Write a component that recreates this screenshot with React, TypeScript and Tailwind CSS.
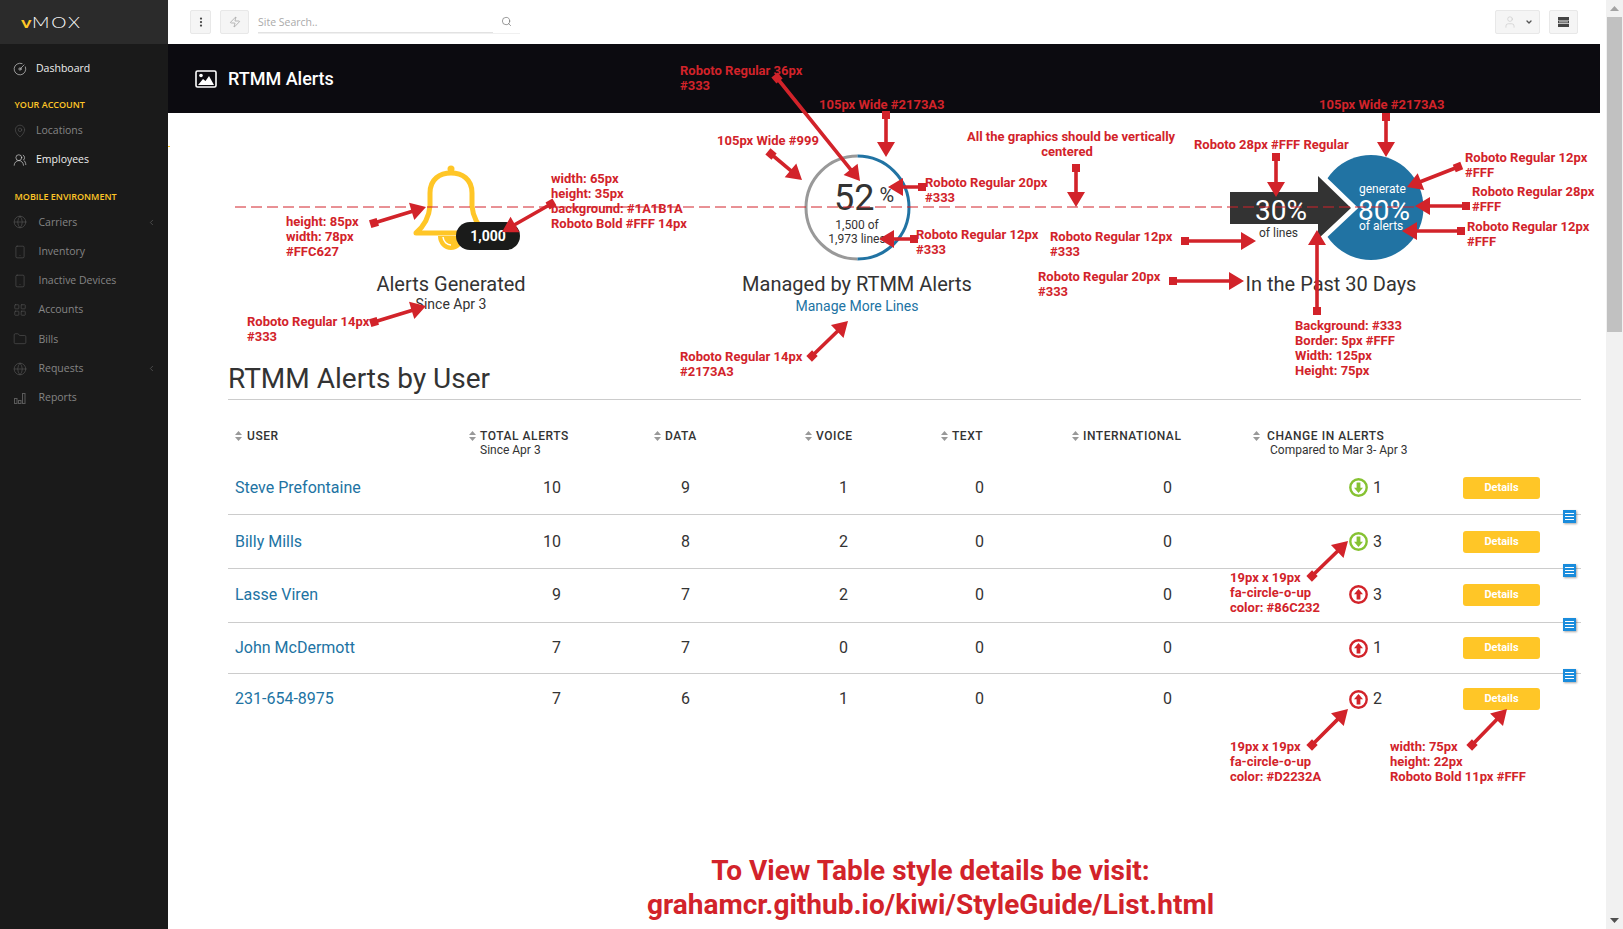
import React from 'react';
import { ChevronDown, ChevronLeft, CircleGauge, EllipsisVertical, Folder, Globe, LayoutGrid, MapPin, Search, Smartphone, User, UsersRound, Zap } from 'lucide-react';

const RED = '#d2232a';

const BarsIcon = ({ size = 14, className }: { size?: number; strokeWidth?: number; className?: string }) => (
  <svg width={size} height={size} viewBox="0 0 14 14" fill="none" stroke="currentColor" strokeWidth="1" className={className}>
    <rect x="1.5" y="7.5" width="2.5" height="5" />
    <rect x="5.5" y="9.5" width="2.5" height="3" />
    <rect x="9.5" y="2.5" width="2.5" height="10" />
  </svg>
);

const SideItem = ({ icon: Icon, label, active, chevron, wide }: { icon: React.ElementType; label: string; active?: boolean; chevron?: boolean; wide?: boolean }) => (
  <div className={`flex h-[29.25px] items-center pl-[13px] pr-[12px] text-[10.5px] ${active ? 'text-[#eeeeee]' : 'text-[#858585]'}`}>
    <Icon size={14} strokeWidth={1} className={active ? 'shrink-0' : 'shrink-0 text-[#5a5a5a]'} />
    <span className={wide ? 'ml-[11.5px]' : 'ml-[9px]'}>{label}</span>
    {chevron && <ChevronLeft size={9} className="ml-auto text-[#5a5a5a]" />}
  </div>
);

const Sidebar = () => (
  <aside className="flex h-full w-[168px] shrink-0 flex-col bg-[#1a1a1a] font-['Open_Sans',sans-serif]">
    <div className="flex h-[44px] items-center bg-[#2b2b2b] pl-[21px] font-['Lato',sans-serif] text-[16px] leading-none text-white">
      <span className="inline-block origin-left scale-x-125 font-bold text-[#ffc627]">v</span>
      <span className="ml-[3px] inline-block origin-left scale-x-[1.2] font-light tracking-[1.6px]">MOX</span>
    </div>
    <div className="mt-[10px]">
      <SideItem icon={CircleGauge} label="Dashboard" active />
    </div>
    <div className="mt-[15px] pl-[14.5px] text-[9px] font-semibold leading-[14px] text-[#ffc627]">YOUR ACCOUNT</div>
    <div className="mt-[4px]">
      <SideItem icon={MapPin} label="Locations" />
      <SideItem icon={UsersRound} label="Employees" active />
    </div>
    <div className="mt-[15px] pl-[14.5px] text-[9px] font-semibold leading-[14px] text-[#ffc627]">MOBILE ENVIRONMENT</div>
    <div className="mt-[4px]">
      <SideItem icon={Globe} label="Carriers" chevron wide />
      <SideItem icon={Smartphone} label="Inventory" wide />
      <SideItem icon={Smartphone} label="Inactive Devices" wide />
      <SideItem icon={LayoutGrid} label="Accounts" wide />
      <SideItem icon={Folder} label="Bills" wide />
      <SideItem icon={Globe} label="Requests" chevron wide />
      <SideItem icon={BarsIcon} label="Reports" wide />
    </div>
  </aside>
);

const TopBar = () => (
  <header className="flex h-[44px] shrink-0 items-center pl-[22px] pr-[28px]">
    <div className="flex h-[24px] w-[21px] items-center justify-center rounded-[2px] border border-[#e8e8e8] bg-[#f5f5f5] text-[#444444]">
      <EllipsisVertical size={12} strokeWidth={2.5} />
    </div>
    <div className="ml-[9px] flex h-[24px] w-[29px] items-center justify-center rounded-[2px] border border-[#e8e8e8] bg-[#f5f5f5] text-[#777777]">
      <Zap size={12} strokeWidth={1} />
    </div>
    <div className="ml-[9px] flex h-[24px] w-[262px] items-center border-b border-[#f0f0f0]">
      <div className="flex h-full w-[235px] items-center border-b border-[#e2e2e2] pt-[3px] font-['Open_Sans',sans-serif] text-[10.5px] text-[#aaaaaa]">Site Search..</div>
      <Search size={11} strokeWidth={1.25} className="ml-[8px] text-[#555555]" />
    </div>
    <div className="ml-auto flex h-[24px] w-[45px] items-center justify-center gap-[8px] rounded-[2px] border border-[#e8e8e8] bg-[#f5f5f5]">
      <User size={14} strokeWidth={1} className="text-[#c4c4c4]" />
      <ChevronDown size={8} strokeWidth={4} className="text-[#555555]" />
    </div>
    <div className="ml-[9px] flex h-[24px] w-[29px] items-center justify-center rounded-[2px] border border-[#e8e8e8] bg-[#f5f5f5]">
      <svg width="11" height="10" viewBox="0 0 11 10" fill="none" stroke="#444444" strokeWidth="1">
        <rect x="0.5" y="0.5" width="10" height="2" fill="#444444" />
        <rect x="0.5" y="4" width="10" height="1.8" />
        <rect x="0.5" y="7.5" width="10" height="2" fill="#444444" />
      </svg>
    </div>
  </header>
);

const BellGraphic = () => (
  <div className="relative h-[85px] w-[78px]">
    <svg width="78" height="85" viewBox="0 0 78 85" fill="none">
      <circle cx="39" cy="4" r="3.5" fill="#ffc627" />
      <path d="M4 68C12 61 17 53 18 41V28C18 14 28 8 39 8C50 8 60 14 60 28V41C61 53 66 61 74 68Z" stroke="#ffc627" strokeWidth="5" strokeLinejoin="round" />
      <path d="M26 71A13 14 0 0 0 52 71Z" fill="#ffc627" />
      <path d="M31 72A8 9 0 0 0 39 80" stroke="#ffffff" strokeWidth="1.5" />
    </svg>
    <div className="absolute left-[44px] top-[57px] flex h-[28px] w-[64px] items-center justify-center rounded-full bg-[#1a1b1a] text-[14px] font-bold text-white">1,000</div>
  </div>
);

const RingGraphic = () => (
  <div className="relative h-[107px] w-[107px]">
    <svg width="107" height="107" viewBox="0 0 107 107" fill="none" strokeWidth="3">
      <path d="M53.5 2A51.5 51.5 0 0 0 53.5 105" stroke="#999999" />
      <path d="M53.5 2A51.5 51.5 0 0 1 53.5 105" stroke="#2173a3" />
    </svg>
    <div className="absolute inset-0 flex flex-col items-center pt-[23px] text-[#333333]">
      <div className="flex items-start pl-[14px] leading-none">
        <span className="text-[36px] leading-[42px]">52</span>
        <span className="ml-[5px] mt-[8px] text-[20px] leading-[20px]">%</span>
      </div>
      <div className="-mt-[1px] text-center text-[12px] leading-[14px]">
        1,500 of<br />1,973 lines
      </div>
    </div>
  </div>
);

const ShareGraphic = () => (
  <div className="relative mr-[8px] h-[105px] w-[194px]">
    <svg width="194" height="105" viewBox="0 0 194 105">
      <circle cx="141" cy="52.5" r="52.5" fill="#2173a3" />
      <path d="M88 21L121 53L88 84Z" fill="#333333" stroke="#ffffff" strokeWidth="10" strokeLinejoin="miter" />
      <path d="M0 37H88V21L121 53L88 84V69H0Z" fill="#333333" />
    </svg>
    <div className="absolute left-[25px] top-[38px] text-[28px] leading-[36px] text-white">30%</div>
    <div className="absolute left-[29px] top-[71px] text-[12px] leading-[14px] text-[#333333]">of lines</div>
    <div className="absolute left-[129px] top-[27px] text-[12px] leading-[14px] text-white">generate</div>
    <div className="absolute left-[128px] top-[47px] text-[28px] leading-[17px] text-white">80%</div>
    <div className="absolute left-[129px] top-[64px] text-[12px] leading-[14px] text-white">of alerts</div>
  </div>
);

const Stats = () => (
  <section className="flex pl-[183px] pt-[42px] text-[#333333]">
    <div className="flex w-[200px] flex-col items-center">
      <div className="flex h-[105px] items-center"><BellGraphic /></div>
      <h3 className="mt-[12px] text-[20px] leading-[24px]">Alerts Generated</h3>
      <p className="-mt-px text-[14px] leading-[18px]">Since Apr 3</p>
    </div>
    <div className="ml-[156px] flex w-[300px] flex-col items-center">
      <div className="flex h-[105px] items-center"><RingGraphic /></div>
      <h3 className="mt-[12px] text-[20px] leading-[24px]">Managed by RTMM Alerts</h3>
      <p className="mt-[1px] text-[14px] leading-[18px] text-[#2173a3]">Manage More Lines</p>
    </div>
    <div className="ml-[174px] flex w-[300px] flex-col items-center">
      <div className="flex h-[105px] items-center"><ShareGraphic /></div>
      <h3 className="mt-[12px] text-[20px] leading-[24px]">In the Past 30 Days</h3>
    </div>
  </section>
);

const SortIcon = () => (
  <svg width="7" height="10" viewBox="0 0 7 10" fill="#999999" className="shrink-0">
    <path d="M3.5 0L7 4H0Z" />
    <path d="M3.5 10L7 6H0Z" />
  </svg>
);

const columns = 'grid grid-cols-[241px_185px_151px_136px_131px_181px_210px_118px]';

const HeadCell = ({ title, sub, gap = 'gap-[5px]' }: { title: string; sub?: string; gap?: string }) => (
  <div>
    <div className={`flex items-center text-[12px] font-medium leading-[14px] tracking-[0.55px] text-[#333333] ${gap}`}>
      <SortIcon />
      {title}
    </div>
    {sub && <div className="pl-[11px] text-[12px] leading-[15px] text-[#333333]">{sub}</div>}
  </div>
);

const ChangeIcon = ({ up }: { up: boolean }) => (
  <svg width="19" height="19" viewBox="0 0 19 19" fill="none" className="shrink-0">
    <circle cx="9.5" cy="9.5" r="8.2" stroke={up ? RED : '#86c232'} strokeWidth="2.4" />
    <path d={up ? 'M9.5 4L14 9.2H11.4V14.5H7.6V9.2H5Z' : 'M9.5 15L14 9.8H11.4V4.5H7.6V9.8H5Z'} fill={up ? RED : '#86c232'} />
  </svg>
);

const rows = [
  { name: 'Steve Prefontaine', total: 10, data: 9, voice: 1, text: 0, intl: 0, up: false, change: 1, height: 'h-[54px]', line: true },
  { name: 'Billy Mills', total: 10, data: 8, voice: 2, text: 0, intl: 0, up: false, change: 3, height: 'h-[54px]', line: true },
  { name: 'Lasse Viren', total: 9, data: 7, voice: 2, text: 0, intl: 0, up: true, change: 3, height: 'h-[54px] pb-[2px]', line: true },
  { name: 'John McDermott', total: 7, data: 7, voice: 0, text: 0, intl: 0, up: true, change: 1, height: 'h-[51px]', line: true },
  { name: '231-654-8975', total: 7, data: 6, voice: 1, text: 0, intl: 0, up: true, change: 2, height: 'h-[50px]', line: false },
];

const AlertsTable = () => (
  <section className="ml-[60px] mr-[25px]">
    <h2 className="mt-[47px] border-b border-[#cccccc] pb-[3px] text-[28px] leading-[34px] text-[#333333]">RTMM Alerts by User</h2>
    <div className={`${columns} h-[61px] pt-[29px]`}>
      <div className="pl-[7px]"><HeadCell title="USER" /></div>
      <HeadCell title="TOTAL ALERTS" sub="Since Apr 3" gap="gap-[4px]" />
      <HeadCell title="DATA" gap="gap-[4px]" />
      <HeadCell title="VOICE" gap="gap-[4px]" />
      <HeadCell title="TEXT" gap="gap-[4px]" />
      <HeadCell title="INTERNATIONAL" gap="gap-[4px]" />
      <div>
        <HeadCell title="CHANGE IN ALERTS" gap="gap-[7px]" />
        <div className="pl-[17px] text-[12px] leading-[15px] text-[#333333]">Compared to Mar 3- Apr 3</div>
      </div>
    </div>
    {rows.map((row) => (
      <div key={row.name} className={`${columns} relative items-center text-[16px] text-[#333333] ${row.height} ${row.line ? 'border-b border-[#cccccc]' : ''}`}>
        <div className="pl-[7px] text-[#2173a3]">{row.name}</div>
        <div className="pr-[93px] text-right">{row.total}</div>
        <div className="pr-[115px] text-right">{row.data}</div>
        <div className="pr-[93px] text-right">{row.voice}</div>
        <div className="pr-[88px] text-right">{row.text}</div>
        <div className="pr-[81px] text-right">{row.intl}</div>
        <div className="flex items-center gap-[5px] pl-[96px]">
          <ChangeIcon up={row.up} />
          {row.change}
        </div>
        <div className="flex h-[22px] w-[77px] items-center justify-center rounded-[3px] bg-[#ffc627] pt-px text-[11px] font-bold text-white">Details</div>
        {row.line && (
          <div className="absolute -bottom-[9px] right-[5px] z-10 flex h-[13px] w-[13px] flex-col justify-center gap-[2px] bg-[#1a8cdc] px-[2px] shadow-[1px_1px_2px_rgba(0,0,0,0.35)]">
            <span className="h-px bg-white" />
            <span className="h-px bg-white" />
            <span className="h-px bg-white" />
          </div>
        )}
      </div>
    ))}
    <div className="ml-[52px] mt-[130px] text-center text-[28px] font-bold leading-[34px] text-[#d2232a]">
      To View Table style details be visit:<br />
      grahamcr.github.io/kiwi/StyleGuide/List.html
    </div>
  </section>
);

// callout arrows, tail -> tip, in page pixels
const arrows = [
  [374, 223, 426, 207], [374, 322, 426, 306], [551, 204, 502, 232], [777, 78, 860, 181],
  [771, 154, 802, 180], [886, 115, 886, 157], [922, 187, 888, 187], [914, 239, 879, 239],
  [812, 356, 848, 321], [1076, 168, 1076, 207], [1276, 157, 1276, 197], [1386, 117, 1386, 157],
  [1458, 167, 1407, 187], [1466, 206, 1415, 206], [1461, 231, 1402, 231], [1185, 241, 1256, 241],
  [1173, 281, 1244, 281], [1317, 311, 1317, 230], [1312, 576, 1348, 541], [1312, 745, 1348, 709],
  [1472, 745, 1507, 709],
];

const arrowPoints = ([x1, y1, x2, y2]: number[]) => {
  const len = Math.hypot(x2 - x1, y2 - y1);
  const ux = (x2 - x1) / len;
  const uy = (y2 - y1) / len;
  const at = (along: number, side: number) => `${x1 + ux * along - uy * side},${y1 + uy * along + ux * side}`;
  const base = len - 15;
  return {
    tail: [at(-4, -4), at(4, -4), at(4, 4), at(-4, 4)].join(' '),
    body: [at(0, -1.8), at(base, -1.8), at(base, -9), at(len, 0), at(base, 9), at(base, 1.8), at(0, 1.8)].join(' '),
  };
};

const Note = ({ className, lines }: { className: string; lines: string[] }) => (
  <div className={`absolute whitespace-nowrap text-[13px] font-bold leading-[15px] text-[#d2232a] ${className}`}>
    {lines.map((line) => (
      <div key={line}>{line}</div>
    ))}
  </div>
);

const Callouts = () => (
  <div className="pointer-events-none absolute inset-0 z-20">
    <div className="absolute left-[168px] top-[146px] h-px w-[2px] bg-[#ffc627]" />
    <svg width="1623" height="929" className="absolute left-0 top-0">
      <line x1="235" y1="207" x2="1423" y2="207" stroke={RED} strokeWidth="1" strokeDasharray="11 5" />
      {arrows.map((arrow) => {
        const { tail, body } = arrowPoints(arrow);
        return (
          <g key={arrow.join('-')} fill={RED}>
            <polygon points={tail} />
            <polygon points={body} />
          </g>
        );
      })}
    </svg>
    <Note className="left-[286px] top-[214px]" lines={['height: 85px', 'width: 78px', '#FFC627']} />
    <Note className="left-[247px] top-[314px]" lines={['Roboto Regular 14px', '#333']} />
    <Note className="left-[551px] top-[171px]" lines={['width: 65px', 'height: 35px', 'background: #1A1B1A', 'Roboto Bold #FFF 14px']} />
    <Note className="left-[680px] top-[63px]" lines={['Roboto Regular 36px', '#333']} />
    <Note className="left-[819px] top-[97px]" lines={['105px Wide #2173A3']} />
    <Note className="left-[717px] top-[133px]" lines={['105px Wide #999']} />
    <Note className="left-[925px] top-[175px]" lines={['Roboto Regular 20px', '#333']} />
    <Note className="left-[916px] top-[227px]" lines={['Roboto Regular 12px', '#333']} />
    <Note className="left-[680px] top-[349px]" lines={['Roboto Regular 14px', '#2173A3']} />
    <Note className="left-[1050px] top-[229px]" lines={['Roboto Regular 12px', '#333']} />
    <Note className="left-[1038px] top-[269px]" lines={['Roboto Regular 20px', '#333']} />
    <Note className="left-[967px] top-[129px] w-[200px] text-center whitespace-normal" lines={['All the graphics should be vertically', 'centered']} />
    <Note className="left-[1194px] top-[137px]" lines={['Roboto 28px #FFF Regular']} />
    <Note className="left-[1319px] top-[97px]" lines={['105px Wide #2173A3']} />
    <Note className="left-[1465px] top-[150px]" lines={['Roboto Regular 12px', '#FFF']} />
    <Note className="left-[1472px] top-[184px]" lines={['Roboto Regular 28px', '#FFF']} />
    <Note className="left-[1467px] top-[219px]" lines={['Roboto Regular 12px', '#FFF']} />
    <Note className="left-[1295px] top-[318px]" lines={['Background: #333', 'Border: 5px #FFF', 'Width: 125px', 'Height: 75px']} />
    <Note className="left-[1230px] top-[570px]" lines={['19px x 19px', 'fa-circle-o-up', 'color: #86C232']} />
    <Note className="left-[1230px] top-[739px]" lines={['19px x 19px', 'fa-circle-o-up', 'color: #D2232A']} />
    <Note className="left-[1390px] top-[739px]" lines={['width: 75px', 'height: 22px', 'Roboto Bold 11px #FFF']} />
  </div>
);

const Scrollbar = () => (
  <div className="flex h-full w-[17px] shrink-0 flex-col items-center bg-[#f1f1f1]">
    <div className="flex h-[17px] items-center justify-center">
      <svg width="9" height="5" viewBox="0 0 9 5" fill="#a3a3a3"><path d="M4.5 0L9 5H0Z" /></svg>
    </div>
    <div className="h-[315px] w-[15px] bg-[#c1c1c1]" />
    <div className="mt-auto flex h-[17px] items-center justify-center">
      <svg width="9" height="5" viewBox="0 0 9 5" fill="#505050"><path d="M4.5 5L9 0H0Z" /></svg>
    </div>
  </div>
);

export default function App() {
  return (
    <div className="relative flex h-[929px] w-[1623px] overflow-hidden bg-white font-['Roboto',sans-serif]">
      <Sidebar />
      <main className="h-full min-w-0 flex-1 overflow-hidden">
        <TopBar />
        <div className="mr-[6px] flex h-[69px] items-center gap-[11px] bg-[#0c0b10] pl-[27px] text-[18px] font-medium text-white">
          <svg width="22" height="18" viewBox="0 0 22 18" fill="none">
            <rect x="1" y="1" width="20" height="16" rx="1.5" stroke="#ffffff" strokeWidth="1.6" />
            <circle cx="6" cy="5.5" r="1.8" fill="#ffffff" />
            <path d="M3 15L8 9L10.5 11L14 6L19 15Z" fill="#ffffff" />
          </svg>
          RTMM Alerts
        </div>
        <Stats />
        <AlertsTable />
      </main>
      <Scrollbar />
      <Callouts />
    </div>
  );
}
